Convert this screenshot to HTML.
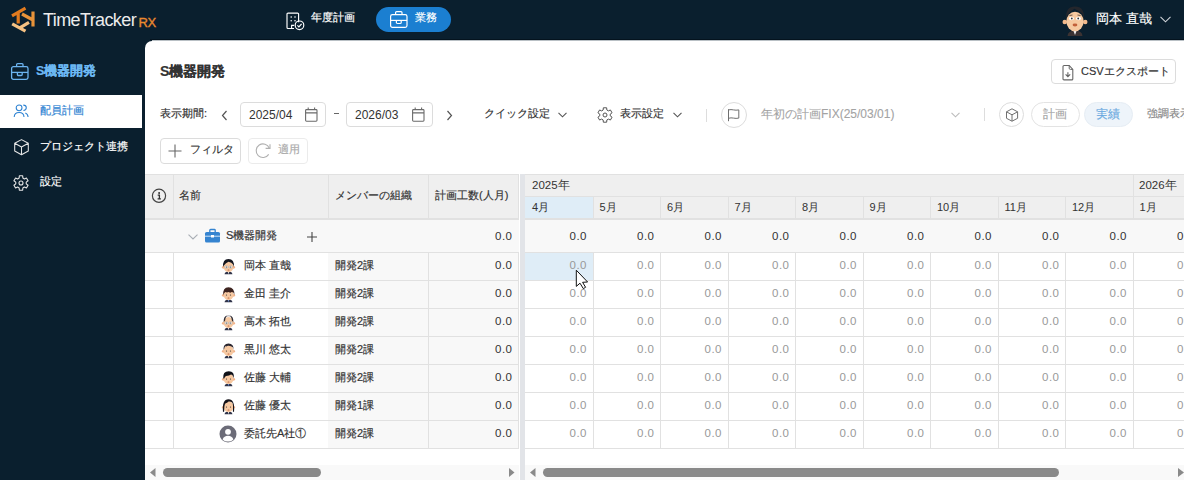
<!DOCTYPE html><html><head><meta charset="utf-8"><style>
*{box-sizing:border-box;margin:0;padding:0}
html,body{width:1184px;height:480px;overflow:hidden;background:#0a1f2e;font-family:"Liberation Sans",sans-serif;color:#333;font-size:12px}
.a{position:absolute}
.t{position:absolute;white-space:nowrap;line-height:1;-webkit-text-stroke:0.17px currentColor}
#main{position:absolute;left:145px;top:41px;width:1039px;height:439px;background:#fff;border-top-left-radius:7px;overflow:hidden}
svg{position:absolute;overflow:visible}
</style></head><body>
<svg style="left:8px;top:3px" width="32" height="32" viewBox="0 0 32 32">
<path d="M4 12.8 L17.5 5.2 M10.2 8.8 V20.5" fill="none" stroke="#e27b1f" stroke-width="3.2"/>
<path d="M25 8.6 V23.4 M14 11 L25 17" fill="none" stroke="#e8933a" stroke-width="3.2"/>
<path d="M4.2 20.8 L17.5 28.2 M12.2 24.6 L21 19.3" fill="none" stroke="#f6c283" stroke-width="3.2"/>
</svg>
<div class="t" style="left:43px;top:11px;font-size:18px;color:#ececec;letter-spacing:-0.6px;-webkit-text-stroke:0">TimeTracker</div>
<div class="t" style="left:138.5px;top:16px;font-size:13px;color:#eb8a2e;letter-spacing:-0.4px;-webkit-text-stroke:0.35px currentColor">RX</div>
<svg style="left:286px;top:11.6px" width="19" height="19" viewBox="0 0 19 19">
<path d="M12.6 10.2 V2.1 a1 1 0 0 0 -1 -1 H2 a1 1 0 0 0 -1 1 V15.5 a1 1 0 0 0 1 1 H8" fill="none" stroke="#fff" stroke-width="1.15"/>
<path d="M5.6 16.5 V13.4 H8.2" fill="none" stroke="#fff" stroke-width="1.1"/>
<g fill="#fff"><circle cx="5.2" cy="5" r="0.8"/><circle cx="9" cy="5" r="0.8"/><circle cx="5.2" cy="8.8" r="0.8"/><circle cx="9" cy="8.8" r="0.8"/></g>
<circle cx="13.5" cy="13.3" r="4.3" fill="none" stroke="#fff" stroke-width="1.15"/>
<path d="M11.4 13.4 L12.9 14.9 L15.6 11.8" fill="none" stroke="#fff" stroke-width="1.15"/>
</svg>
<div class="t" style="left:311px;top:12px;font-size:11px;color:#fff">年度計画</div>
<div class="a" style="left:376px;top:7px;width:75px;height:25px;border-radius:12.5px;background:#1b7fd1"></div>
<svg style="left:390px;top:11px" width="18" height="17" viewBox="0 0 18 17">
<rect x="0.6" y="3.7" width="16.4" height="12.6" rx="1.8" fill="none" stroke="#fff" stroke-width="1.2"/>
<path d="M5.6 3.7 V1.6 a1 1 0 0 1 1 -1 H11 a1 1 0 0 1 1 1 V3.7" fill="none" stroke="#fff" stroke-width="1.2"/>
<path d="M0.6 9.4 H17" stroke="#fff" stroke-width="1.2"/>
<path d="M6.4 9.4 V11.4 a1.1 1.1 0 0 0 1.1 1.1 H10.1 a1.1 1.1 0 0 0 1.1 -1.1 V9.4" fill="none" stroke="#fff" stroke-width="1.2"/>
</svg>
<div class="t" style="left:415px;top:12px;font-size:11px;color:#fff">業務</div>
<svg style="left:1060px;top:4px" width="30" height="32" viewBox="0 0 30 32">
<path d="M7.5 32 Q8 26.5 15 26.5 Q22 26.5 22.5 32 Z" fill="#3b3232"/>
<path d="M13.3 26.5 L15 31 L16.7 26.5 Z" fill="#f4f4f4"/>
<circle cx="4.8" cy="18" r="2.3" fill="#f2b98c"/><circle cx="25.2" cy="18" r="2.3" fill="#f2b98c"/>
<ellipse cx="15" cy="17.5" rx="8.6" ry="9.8" fill="#f6c9a0"/>
<path d="M6.3 15 Q5 2.5 15 2.5 Q25 2.5 23.7 15 L22.5 10 Q19.5 7 14.3 4.8 Q10.5 7.5 7.8 10.5 Z" fill="#24262c"/>
<ellipse cx="11.5" cy="14.5" rx="2.6" ry="1.7" fill="#fff"/><ellipse cx="18.5" cy="14.5" rx="2.6" ry="1.7" fill="#fff"/>
<circle cx="11.8" cy="14.5" r="0.9" fill="#333"/><circle cx="18.2" cy="14.5" r="0.9" fill="#333"/>
<path d="M9.5 11.5 L12.5 11 M17.5 11 L20.5 11.5" stroke="#5a4a40" stroke-width="0.9"/>
<ellipse cx="15" cy="21" rx="2.4" ry="1.4" fill="#c2603a"/>
</svg>
<div class="t" style="left:1096px;top:12px;font-size:13px;color:#fff">岡本 直哉</div>
<svg style="left:1160px;top:16px" width="11" height="7" viewBox="0 0 11 7"><path d="M0.5 0.8 L5.5 5.8 L10.5 0.8" fill="none" stroke="#cfd3d8" stroke-width="1.1"/></svg>
<svg style="left:11px;top:62.7px" width="18" height="17" viewBox="0 0 18 17">
<rect x="0.6" y="3.7" width="16.4" height="12.6" rx="1.8" fill="none" stroke="#6cb4f0" stroke-width="1.3"/>
<path d="M5.6 3.7 V1.6 a1 1 0 0 1 1 -1 H11 a1 1 0 0 1 1 1 V3.7" fill="none" stroke="#6cb4f0" stroke-width="1.3"/>
<path d="M0.6 9.4 H17" stroke="#6cb4f0" stroke-width="1.3"/>
<path d="M6.4 9.4 V11.4 a1.1 1.1 0 0 0 1.1 1.1 H10.1 a1.1 1.1 0 0 0 1.1 -1.1 V9.4" fill="none" stroke="#6cb4f0" stroke-width="1.3"/>
</svg>
<div class="t" style="left:36px;top:64.5px;font-size:12.5px;font-weight:bold;color:#6cb8f2">S機器開発</div>
<div class="a" style="left:0;top:95px;width:142px;height:33px;background:#fff"></div>
<svg style="left:13px;top:104px" width="17" height="14" viewBox="0 0 17 14">
<circle cx="6.1" cy="3.8" r="2.9" fill="none" stroke="#2d82d2" stroke-width="1.05"/>
<path d="M1.2 13 Q1.4 8.4 6.1 8.4 Q10.8 8.4 11 13" fill="none" stroke="#2d82d2" stroke-width="1.05"/>
<path d="M10.3 1.1 Q13.3 1.1 13.3 3.8 Q13.3 6.4 10.4 6.5" fill="none" stroke="#2d82d2" stroke-width="1.05"/>
<path d="M12.3 8.9 Q14.9 9.8 15.1 13" fill="none" stroke="#2d82d2" stroke-width="1.05"/>
</svg>
<div class="t" style="left:40px;top:105px;font-size:11px;color:#2d82d2">配員計画</div>
<svg style="left:13.5px;top:139px" width="16" height="17" viewBox="0 0 16 17">
<path d="M7.5 0.6 L14.3 4.3 V12 L7.5 15.7 L0.7 12 V4.3 Z M0.7 4.3 L7.5 8 L14.3 4.3 M7.5 8 V15.7" fill="none" stroke="#e6e6e6" stroke-width="1.05" stroke-linejoin="round"/>
</svg>
<div class="t" style="left:40px;top:141px;font-size:11px;color:#fff">プロジェクト連携</div>
<svg style="left:13px;top:175px" width="16" height="16" viewBox="0 0 16 16"><path d="M6.13 3.04 L6.35 0.79 L9.65 0.79 L9.87 3.04 L11.36 3.90 L13.42 2.96 L15.07 5.82 L13.23 7.14 L13.23 8.86 L15.07 10.18 L13.42 13.04 L11.36 12.10 L9.87 12.96 L9.65 15.21 L6.35 15.21 L6.13 12.96 L4.64 12.10 L2.58 13.04 L0.93 10.18 L2.77 8.86 L2.77 7.14 L0.93 5.82 L2.58 2.96 L4.64 3.90 Z" fill="none" stroke="#e6e6e6" stroke-width="1.1" stroke-linejoin="round"/><circle cx="8" cy="8" r="2.0" fill="none" stroke="#e6e6e6" stroke-width="1.1"/></svg>
<div class="t" style="left:40px;top:176px;font-size:11px;color:#fff">設定</div>
<div class="a" style="left:150px;top:39px;width:1034px;height:1px;background:#04131e"></div>
<div class="a" style="left:152px;top:40px;width:1032px;height:1px;background:#b9c0c5"></div>
<div id="main">
<div class="t" style="left:15px;top:23px;font-size:14px;color:#333;font-weight:bold">S機器開発</div>
<div class="a" style="left:906px;top:18px;width:125px;height:25px;border:1px solid #dcdcdc;border-radius:4px;background:#fff"></div>
<svg style="left:916.5px;top:23.5px" width="12" height="16" viewBox="0 0 12 16"><path d="M1 1.5 a1 1 0 0 1 1 -1 H7.2 L10.8 4.4 V13.9 a1 1 0 0 1 -1 1 H2 a1 1 0 0 1 -1 -1 Z" fill="none" stroke="#666" stroke-width="1.1"/><path d="M7.2 0.5 V3.2 a1.2 1.2 0 0 0 1.2 1.2 H10.8" fill="none" stroke="#666" stroke-width="1"/><path d="M5.9 7.2 V11.6 M3.6 9.4 L5.9 11.6 L8.2 9.4" fill="none" stroke="#666" stroke-width="1.15"/></svg>
<div class="t" style="left:936px;top:25px;font-size:11px;color:#333;">CSVエクスポート</div>
<div class="t" style="left:15px;top:67px;font-size:11px;color:#333;">表示期間:</div>
<svg style="left:76px;top:69px" width="7" height="11" viewBox="0 0 7 11"><path d="M5.5 1 L1.5 5.5 L5.5 10" fill="none" stroke="#555" stroke-width="1.2"/></svg>
<div class="a" style="left:95px;top:61px;width:86px;height:25px;border:1px solid #dcdcdc;border-radius:4px;background:#fff"></div>
<div class="t" style="left:104px;top:68px;font-size:12px;color:#333;-webkit-text-stroke:0">2025/04</div>
<svg style="left:159.5px;top:66px" width="13" height="15" viewBox="0 0 13 15"><rect x="0.6" y="2.6" width="11.4" height="11.6" rx="0.9" fill="none" stroke="#6a6a6a" stroke-width="1.1"/><path d="M0.6 5.9 H12 M3.2 0.6 V3 M9.6 0.6 V3" stroke="#6a6a6a" stroke-width="1.1"/></svg>
<div class="a" style="left:201px;top:61px;width:87px;height:25px;border:1px solid #dcdcdc;border-radius:4px;background:#fff"></div>
<div class="t" style="left:210px;top:68px;font-size:12px;color:#333;-webkit-text-stroke:0">2026/03</div>
<svg style="left:266.5px;top:66px" width="13" height="15" viewBox="0 0 13 15"><rect x="0.6" y="2.6" width="11.4" height="11.6" rx="0.9" fill="none" stroke="#6a6a6a" stroke-width="1.1"/><path d="M0.6 5.9 H12 M3.2 0.6 V3 M9.6 0.6 V3" stroke="#6a6a6a" stroke-width="1.1"/></svg>
<div class="a" style="left:189px;top:72px;width:5px;height:1px;background:#666"></div>
<svg style="left:301px;top:69px" width="7" height="11" viewBox="0 0 7 11"><path d="M1.5 1 L5.5 5.5 L1.5 10" fill="none" stroke="#555" stroke-width="1.2"/></svg>
<div class="t" style="left:339px;top:67px;font-size:11px;color:#333;">クイック設定</div>
<svg style="left:413px;top:71px" width="9" height="6" viewBox="0 0 9 6"><path d="M0.5 0.8 L4.5 4.8 L8.5 0.8" fill="none" stroke="#555" stroke-width="1.1"/></svg>
<svg style="left:452px;top:65.5px" width="16" height="16" viewBox="0 0 16 16"><path d="M6.13 3.04 L6.35 0.79 L9.65 0.79 L9.87 3.04 L11.36 3.90 L13.42 2.96 L15.07 5.82 L13.23 7.14 L13.23 8.86 L15.07 10.18 L13.42 13.04 L11.36 12.10 L9.87 12.96 L9.65 15.21 L6.35 15.21 L6.13 12.96 L4.64 12.10 L2.58 13.04 L0.93 10.18 L2.77 8.86 L2.77 7.14 L0.93 5.82 L2.58 2.96 L4.64 3.90 Z" fill="none" stroke="#555" stroke-width="1.0" stroke-linejoin="round"/><circle cx="8" cy="8" r="2.0" fill="none" stroke="#555" stroke-width="1.0"/></svg>
<div class="t" style="left:475px;top:67px;font-size:11px;color:#333;">表示設定</div>
<svg style="left:528px;top:71px" width="9" height="6" viewBox="0 0 9 6"><path d="M0.5 0.8 L4.5 4.8 L8.5 0.8" fill="none" stroke="#555" stroke-width="1.1"/></svg>
<div class="a" style="left:561px;top:68px;width:1px;height:13px;background:#ddd"></div>
<div class="a" style="left:576px;top:61px;width:26px;height:26px;border:1px solid #dcdcdc;border-radius:50%"></div>
<svg style="left:580px;top:65px" width="16" height="17" viewBox="0 0 16 17"><path d="M3.5 3.2 V15.2" stroke="#6f6f6f" stroke-width="1"/><path d="M3.5 3.9 Q6 3.3 8.5 3.9 Q11 4.5 13.8 3.9 V12.1 Q11 12.7 8.5 12.1 Q6 11.5 3.5 12.3" fill="none" stroke="#6f6f6f" stroke-width="1"/></svg>
<div class="t" style="left:616px;top:67px;font-size:12px;color:#a3a3a3;-webkit-text-stroke:0.1px currentColor">年初の計画FIX(25/03/01)</div>
<svg style="left:806px;top:71px" width="9" height="6" viewBox="0 0 9 6"><path d="M0.5 0.8 L4.5 4.8 L8.5 0.8" fill="none" stroke="#bbb" stroke-width="1.1"/></svg>
<div class="a" style="left:839px;top:67px;width:1px;height:13px;background:#ddd"></div>
<div class="a" style="left:854px;top:61px;width:25px;height:25px;border:1px solid #dcdcdc;border-radius:50%"></div>
<svg style="left:861px;top:67px" width="13" height="14" viewBox="0 0 13 14"><path d="M6 0.8 L11.6 3.8 V10.3 L6 13.2 L0.5 10.3 V3.8 Z M0.5 3.8 L6 6.8 L11.6 3.8 M6 6.8 V13.2" fill="none" stroke="#707070" stroke-width="1" stroke-linejoin="round"/></svg>
<div class="a" style="left:886px;top:61px;width:49px;height:25px;border:1px solid #e3e3e3;border-radius:13px;background:#fff"></div>
<div class="t" style="left:898px;top:67px;font-size:12px;color:#a3a3a3;-webkit-text-stroke:0.1px currentColor">計画</div>
<div class="a" style="left:939px;top:61px;width:49px;height:25px;border:1px solid #e6edf4;border-radius:13px;background:#eef4fa"></div>
<div class="t" style="left:951px;top:67px;font-size:12px;color:#68a8e0;-webkit-text-stroke:0.1px currentColor">実績</div>
<div class="t" style="left:1002px;top:67px;font-size:11px;color:#888;">強調表示</div>
<div class="a" style="left:15px;top:97px;width:81px;height:26px;border:1px solid #dcdcdc;border-radius:4px;background:#fff"></div>
<svg style="left:23px;top:103px" width="14" height="14" viewBox="0 0 14 14"><path d="M7 0.5 V13.5 M0.5 7 H13.5" stroke="#666" stroke-width="1.1"/></svg>
<div class="t" style="left:45px;top:103px;font-size:11px;color:#333;">フィルタ</div>
<div class="a" style="left:103px;top:97px;width:60px;height:26px;border:1px solid #ebebeb;border-radius:4px;background:#fff"></div>
<svg style="left:105px;top:97px" width="25" height="25" viewBox="0 0 25 25"><path d="M18.7 16.4 A6.8 6.8 0 1 1 19.3 10.2" fill="none" stroke="#b0b0b0" stroke-width="1.1"/><path d="M20 6.2 V10.4 H15.6" fill="none" stroke="#b0b0b0" stroke-width="1.1"/></svg>
<div class="t" style="left:133px;top:103px;font-size:11px;color:#aaa;">適用</div>
<div class="a" style="left:0px;top:133px;width:374px;height:46px;background:#efefef;border-top:1px solid #e1e1e1"></div>
<div class="a" style="left:0px;top:177px;width:374px;height:2px;background:#e1e1e1"></div>
<div class="a" style="left:28px;top:134px;width:1px;height:43px;background:#e1e1e1"></div>
<div class="a" style="left:183px;top:134px;width:1px;height:43px;background:#e1e1e1"></div>
<div class="a" style="left:283px;top:134px;width:1px;height:43px;background:#e1e1e1"></div>
<div class="a" style="left:373px;top:134px;width:1px;height:43px;background:#e1e1e1"></div>
<div class="a" style="left:374px;top:133px;width:1px;height:306px;background:#fff"></div>
<div class="a" style="left:375px;top:133px;width:5px;height:306px;background:#e2e4e8"></div>
<div class="a" style="left:380px;top:133px;width:659px;height:46px;background:#efefef;border-top:1px solid #e1e1e1"></div>
<div class="a" style="left:380px;top:155px;width:659px;height:1px;background:#e1e1e1"></div>
<div class="a" style="left:380px;top:177px;width:659px;height:2px;background:#e1e1e1"></div>
<div class="a" style="left:380px;top:156px;width:67.5px;height:21px;background:#dfedf7"></div>
<div class="t" style="left:387.0px;top:161px;font-size:11px;color:#333;-webkit-text-stroke:0">4月</div>
<div class="a" style="left:447.5px;top:156px;width:1.0px;height:21px;background:#e1e1e1"></div>
<div class="t" style="left:454.5px;top:161px;font-size:11px;color:#333;-webkit-text-stroke:0">5月</div>
<div class="a" style="left:515.0px;top:156px;width:1.0px;height:21px;background:#e1e1e1"></div>
<div class="t" style="left:522.0px;top:161px;font-size:11px;color:#333;-webkit-text-stroke:0">6月</div>
<div class="a" style="left:582.5px;top:156px;width:1.0px;height:21px;background:#e1e1e1"></div>
<div class="t" style="left:589.5px;top:161px;font-size:11px;color:#333;-webkit-text-stroke:0">7月</div>
<div class="a" style="left:650.0px;top:156px;width:1.0px;height:21px;background:#e1e1e1"></div>
<div class="t" style="left:657.0px;top:161px;font-size:11px;color:#333;-webkit-text-stroke:0">8月</div>
<div class="a" style="left:717.5px;top:156px;width:1.0px;height:21px;background:#e1e1e1"></div>
<div class="t" style="left:724.5px;top:161px;font-size:11px;color:#333;-webkit-text-stroke:0">9月</div>
<div class="a" style="left:785.0px;top:156px;width:1.0px;height:21px;background:#e1e1e1"></div>
<div class="t" style="left:792.0px;top:161px;font-size:11px;color:#333;-webkit-text-stroke:0">10月</div>
<div class="a" style="left:852.5px;top:156px;width:1.0px;height:21px;background:#e1e1e1"></div>
<div class="t" style="left:859.5px;top:161px;font-size:11px;color:#333;-webkit-text-stroke:0">11月</div>
<div class="a" style="left:920.0px;top:156px;width:1.0px;height:21px;background:#e1e1e1"></div>
<div class="t" style="left:927.0px;top:161px;font-size:11px;color:#333;-webkit-text-stroke:0">12月</div>
<div class="a" style="left:987.5px;top:156px;width:1.0px;height:21px;background:#e1e1e1"></div>
<div class="t" style="left:994.5px;top:161px;font-size:11px;color:#333;-webkit-text-stroke:0">1月</div>
<div class="a" style="left:987.5px;top:134px;width:1.0px;height:22px;background:#e1e1e1"></div>
<div class="t" style="left:387px;top:138.5px;font-size:11.5px;color:#333;-webkit-text-stroke:0">2025年</div>
<div class="t" style="left:994px;top:138.5px;font-size:11.5px;color:#333;-webkit-text-stroke:0">2026年</div>
<svg style="left:6px;top:147px" width="16" height="16" viewBox="0 0 16 16"><circle cx="8" cy="7.8" r="6.6" fill="none" stroke="#444" stroke-width="1.2"/><circle cx="8.1" cy="5.1" r="1" fill="#333"/><path d="M6.7 7.2 H8.4 V10.9 M6.6 10.9 H9.9" fill="none" stroke="#333" stroke-width="1.3"/></svg>
<div class="t" style="left:34px;top:149px;font-size:11px;color:#333;">名前</div>
<div class="t" style="left:190px;top:149px;font-size:11px;color:#333;">メンバーの組織</div>
<div class="t" style="left:290px;top:149px;font-size:11px;color:#333;">計画工数(人月)</div>
<div class="a" style="left:0px;top:179px;width:374px;height:33px;background:#f8f8f8"></div>
<div class="a" style="left:380px;top:179px;width:659px;height:33px;background:#f8f8f8"></div>
<div class="a" style="left:0px;top:211px;width:374px;height:1px;background:#e1e1e1"></div>
<div class="a" style="left:380px;top:211px;width:659px;height:1px;background:#e1e1e1"></div>
<svg style="left:43px;top:192.5px" width="10" height="6" viewBox="0 0 10 6"><path d="M0.5 0.6 L5 5 L9.5 0.6" fill="none" stroke="#a9aeb5" stroke-width="1.1"/></svg>
<svg style="left:60px;top:188px" width="15" height="14" viewBox="0 0 15 14"><rect x="0" y="3" width="15" height="10.5" rx="1.6" fill="#3584d0"/><path d="M4.8 3.2 V1.3 a0.8 0.8 0 0 1 0.8 -0.8 H9.4 a0.8 0.8 0 0 1 0.8 0.8 V3.2" fill="none" stroke="#3584d0" stroke-width="1.3"/><path d="M0 7.2 H15" stroke="#cfe2f5" stroke-width="1"/><rect x="6" y="6" width="3" height="2.5" fill="#fff"/></svg>
<div class="t" style="left:81px;top:189px;font-size:11px;color:#333;">S機器開発</div>
<svg style="left:162px;top:190.5px" width="10" height="10" viewBox="0 0 10 10"><path d="M5 0 V10 M0 5 H10" stroke="#444" stroke-width="1.1"/></svg>
<div class="t" style="left:267.5px;width:100px;text-align:right;top:189.5px;font-size:11.5px;letter-spacing:0.5px;-webkit-text-stroke:0;color:#333">0.0</div>
<div class="t" style="left:342.0px;width:100px;text-align:right;top:189.5px;font-size:11.5px;letter-spacing:0.5px;-webkit-text-stroke:0;color:#333">0.0</div>
<div class="t" style="left:409.5px;width:100px;text-align:right;top:189.5px;font-size:11.5px;letter-spacing:0.5px;-webkit-text-stroke:0;color:#333">0.0</div>
<div class="t" style="left:477.0px;width:100px;text-align:right;top:189.5px;font-size:11.5px;letter-spacing:0.5px;-webkit-text-stroke:0;color:#333">0.0</div>
<div class="t" style="left:544.5px;width:100px;text-align:right;top:189.5px;font-size:11.5px;letter-spacing:0.5px;-webkit-text-stroke:0;color:#333">0.0</div>
<div class="t" style="left:612.0px;width:100px;text-align:right;top:189.5px;font-size:11.5px;letter-spacing:0.5px;-webkit-text-stroke:0;color:#333">0.0</div>
<div class="t" style="left:679.5px;width:100px;text-align:right;top:189.5px;font-size:11.5px;letter-spacing:0.5px;-webkit-text-stroke:0;color:#333">0.0</div>
<div class="t" style="left:747.0px;width:100px;text-align:right;top:189.5px;font-size:11.5px;letter-spacing:0.5px;-webkit-text-stroke:0;color:#333">0.0</div>
<div class="t" style="left:814.5px;width:100px;text-align:right;top:189.5px;font-size:11.5px;letter-spacing:0.5px;-webkit-text-stroke:0;color:#333">0.0</div>
<div class="t" style="left:882.0px;width:100px;text-align:right;top:189.5px;font-size:11.5px;letter-spacing:0.5px;-webkit-text-stroke:0;color:#333">0.0</div>
<div class="t" style="left:949.5px;width:100px;text-align:right;top:189.5px;font-size:11.5px;letter-spacing:0.5px;-webkit-text-stroke:0;color:#333">0.0</div>
<div class="a" style="left:0px;top:212px;width:183px;height:28px;background:#fff"></div>
<div class="a" style="left:183px;top:212px;width:190px;height:28px;background:#f8f8f8"></div>
<div class="a" style="left:380px;top:212px;width:659px;height:28px;background:#fff"></div>
<div class="a" style="left:0px;top:239px;width:374px;height:1px;background:#e1e1e1"></div>
<div class="a" style="left:380px;top:239px;width:659px;height:1px;background:#e1e1e1"></div>
<div class="a" style="left:28px;top:212px;width:1px;height:27px;background:#e1e1e1"></div>
<div class="a" style="left:283px;top:212px;width:1px;height:27px;background:#e1e1e1"></div>
<div class="a" style="left:373px;top:212px;width:1px;height:27px;background:#e1e1e1"></div>
<div class="a" style="left:380px;top:212px;width:67.5px;height:27px;background:#dfedf7"></div>
<div class="a" style="left:447.5px;top:212px;width:1.0px;height:27px;background:#e1e1e1"></div>
<div class="a" style="left:515.0px;top:212px;width:1.0px;height:27px;background:#e1e1e1"></div>
<div class="a" style="left:582.5px;top:212px;width:1.0px;height:27px;background:#e1e1e1"></div>
<div class="a" style="left:650.0px;top:212px;width:1.0px;height:27px;background:#e1e1e1"></div>
<div class="a" style="left:717.5px;top:212px;width:1.0px;height:27px;background:#e1e1e1"></div>
<div class="a" style="left:785.0px;top:212px;width:1.0px;height:27px;background:#e1e1e1"></div>
<div class="a" style="left:852.5px;top:212px;width:1.0px;height:27px;background:#e1e1e1"></div>
<div class="a" style="left:920.0px;top:212px;width:1.0px;height:27px;background:#e1e1e1"></div>
<div class="a" style="left:987.5px;top:212px;width:1.0px;height:27px;background:#e1e1e1"></div>
<div class="a" style="left:1055.0px;top:212px;width:1.0px;height:27px;background:#e1e1e1"></div>
<div class="t" style="left:99px;top:219px;font-size:11px;color:#333;">岡本 直哉</div>
<div class="t" style="left:190px;top:219px;font-size:11px;color:#333;">開発2課</div>
<div class="t" style="left:267.5px;width:100px;text-align:right;top:219px;font-size:11.5px;letter-spacing:0.5px;-webkit-text-stroke:0;color:#333">0.0</div>
<div class="t" style="left:342.0px;width:100px;text-align:right;top:219px;font-size:11.5px;letter-spacing:0.5px;-webkit-text-stroke:0;color:#999">0.0</div>
<div class="t" style="left:409.5px;width:100px;text-align:right;top:219px;font-size:11.5px;letter-spacing:0.5px;-webkit-text-stroke:0;color:#999">0.0</div>
<div class="t" style="left:477.0px;width:100px;text-align:right;top:219px;font-size:11.5px;letter-spacing:0.5px;-webkit-text-stroke:0;color:#999">0.0</div>
<div class="t" style="left:544.5px;width:100px;text-align:right;top:219px;font-size:11.5px;letter-spacing:0.5px;-webkit-text-stroke:0;color:#999">0.0</div>
<div class="t" style="left:612.0px;width:100px;text-align:right;top:219px;font-size:11.5px;letter-spacing:0.5px;-webkit-text-stroke:0;color:#999">0.0</div>
<div class="t" style="left:679.5px;width:100px;text-align:right;top:219px;font-size:11.5px;letter-spacing:0.5px;-webkit-text-stroke:0;color:#999">0.0</div>
<div class="t" style="left:747.0px;width:100px;text-align:right;top:219px;font-size:11.5px;letter-spacing:0.5px;-webkit-text-stroke:0;color:#999">0.0</div>
<div class="t" style="left:814.5px;width:100px;text-align:right;top:219px;font-size:11.5px;letter-spacing:0.5px;-webkit-text-stroke:0;color:#999">0.0</div>
<div class="t" style="left:882.0px;width:100px;text-align:right;top:219px;font-size:11.5px;letter-spacing:0.5px;-webkit-text-stroke:0;color:#999">0.0</div>
<div class="t" style="left:949.5px;width:100px;text-align:right;top:219px;font-size:11.5px;letter-spacing:0.5px;-webkit-text-stroke:0;color:#999">0.0</div>
<div class="a" style="left:0px;top:240px;width:183px;height:28px;background:#fff"></div>
<div class="a" style="left:183px;top:240px;width:190px;height:28px;background:#f8f8f8"></div>
<div class="a" style="left:380px;top:240px;width:659px;height:28px;background:#fff"></div>
<div class="a" style="left:0px;top:267px;width:374px;height:1px;background:#e1e1e1"></div>
<div class="a" style="left:380px;top:267px;width:659px;height:1px;background:#e1e1e1"></div>
<div class="a" style="left:28px;top:240px;width:1px;height:27px;background:#e1e1e1"></div>
<div class="a" style="left:283px;top:240px;width:1px;height:27px;background:#e1e1e1"></div>
<div class="a" style="left:373px;top:240px;width:1px;height:27px;background:#e1e1e1"></div>
<div class="a" style="left:447.5px;top:240px;width:1.0px;height:27px;background:#e1e1e1"></div>
<div class="a" style="left:515.0px;top:240px;width:1.0px;height:27px;background:#e1e1e1"></div>
<div class="a" style="left:582.5px;top:240px;width:1.0px;height:27px;background:#e1e1e1"></div>
<div class="a" style="left:650.0px;top:240px;width:1.0px;height:27px;background:#e1e1e1"></div>
<div class="a" style="left:717.5px;top:240px;width:1.0px;height:27px;background:#e1e1e1"></div>
<div class="a" style="left:785.0px;top:240px;width:1.0px;height:27px;background:#e1e1e1"></div>
<div class="a" style="left:852.5px;top:240px;width:1.0px;height:27px;background:#e1e1e1"></div>
<div class="a" style="left:920.0px;top:240px;width:1.0px;height:27px;background:#e1e1e1"></div>
<div class="a" style="left:987.5px;top:240px;width:1.0px;height:27px;background:#e1e1e1"></div>
<div class="a" style="left:1055.0px;top:240px;width:1.0px;height:27px;background:#e1e1e1"></div>
<div class="t" style="left:99px;top:247px;font-size:11px;color:#333;">金田 圭介</div>
<div class="t" style="left:190px;top:247px;font-size:11px;color:#333;">開発2課</div>
<div class="t" style="left:267.5px;width:100px;text-align:right;top:247px;font-size:11.5px;letter-spacing:0.5px;-webkit-text-stroke:0;color:#333">0.0</div>
<div class="t" style="left:342.0px;width:100px;text-align:right;top:247px;font-size:11.5px;letter-spacing:0.5px;-webkit-text-stroke:0;color:#999">0.0</div>
<div class="t" style="left:409.5px;width:100px;text-align:right;top:247px;font-size:11.5px;letter-spacing:0.5px;-webkit-text-stroke:0;color:#999">0.0</div>
<div class="t" style="left:477.0px;width:100px;text-align:right;top:247px;font-size:11.5px;letter-spacing:0.5px;-webkit-text-stroke:0;color:#999">0.0</div>
<div class="t" style="left:544.5px;width:100px;text-align:right;top:247px;font-size:11.5px;letter-spacing:0.5px;-webkit-text-stroke:0;color:#999">0.0</div>
<div class="t" style="left:612.0px;width:100px;text-align:right;top:247px;font-size:11.5px;letter-spacing:0.5px;-webkit-text-stroke:0;color:#999">0.0</div>
<div class="t" style="left:679.5px;width:100px;text-align:right;top:247px;font-size:11.5px;letter-spacing:0.5px;-webkit-text-stroke:0;color:#999">0.0</div>
<div class="t" style="left:747.0px;width:100px;text-align:right;top:247px;font-size:11.5px;letter-spacing:0.5px;-webkit-text-stroke:0;color:#999">0.0</div>
<div class="t" style="left:814.5px;width:100px;text-align:right;top:247px;font-size:11.5px;letter-spacing:0.5px;-webkit-text-stroke:0;color:#999">0.0</div>
<div class="t" style="left:882.0px;width:100px;text-align:right;top:247px;font-size:11.5px;letter-spacing:0.5px;-webkit-text-stroke:0;color:#999">0.0</div>
<div class="t" style="left:949.5px;width:100px;text-align:right;top:247px;font-size:11.5px;letter-spacing:0.5px;-webkit-text-stroke:0;color:#999">0.0</div>
<div class="a" style="left:0px;top:268px;width:183px;height:28px;background:#fff"></div>
<div class="a" style="left:183px;top:268px;width:190px;height:28px;background:#f8f8f8"></div>
<div class="a" style="left:380px;top:268px;width:659px;height:28px;background:#fff"></div>
<div class="a" style="left:0px;top:295px;width:374px;height:1px;background:#e1e1e1"></div>
<div class="a" style="left:380px;top:295px;width:659px;height:1px;background:#e1e1e1"></div>
<div class="a" style="left:28px;top:268px;width:1px;height:27px;background:#e1e1e1"></div>
<div class="a" style="left:283px;top:268px;width:1px;height:27px;background:#e1e1e1"></div>
<div class="a" style="left:373px;top:268px;width:1px;height:27px;background:#e1e1e1"></div>
<div class="a" style="left:447.5px;top:268px;width:1.0px;height:27px;background:#e1e1e1"></div>
<div class="a" style="left:515.0px;top:268px;width:1.0px;height:27px;background:#e1e1e1"></div>
<div class="a" style="left:582.5px;top:268px;width:1.0px;height:27px;background:#e1e1e1"></div>
<div class="a" style="left:650.0px;top:268px;width:1.0px;height:27px;background:#e1e1e1"></div>
<div class="a" style="left:717.5px;top:268px;width:1.0px;height:27px;background:#e1e1e1"></div>
<div class="a" style="left:785.0px;top:268px;width:1.0px;height:27px;background:#e1e1e1"></div>
<div class="a" style="left:852.5px;top:268px;width:1.0px;height:27px;background:#e1e1e1"></div>
<div class="a" style="left:920.0px;top:268px;width:1.0px;height:27px;background:#e1e1e1"></div>
<div class="a" style="left:987.5px;top:268px;width:1.0px;height:27px;background:#e1e1e1"></div>
<div class="a" style="left:1055.0px;top:268px;width:1.0px;height:27px;background:#e1e1e1"></div>
<div class="t" style="left:99px;top:275px;font-size:11px;color:#333;">高木 拓也</div>
<div class="t" style="left:190px;top:275px;font-size:11px;color:#333;">開発2課</div>
<div class="t" style="left:267.5px;width:100px;text-align:right;top:275px;font-size:11.5px;letter-spacing:0.5px;-webkit-text-stroke:0;color:#333">0.0</div>
<div class="t" style="left:342.0px;width:100px;text-align:right;top:275px;font-size:11.5px;letter-spacing:0.5px;-webkit-text-stroke:0;color:#999">0.0</div>
<div class="t" style="left:409.5px;width:100px;text-align:right;top:275px;font-size:11.5px;letter-spacing:0.5px;-webkit-text-stroke:0;color:#999">0.0</div>
<div class="t" style="left:477.0px;width:100px;text-align:right;top:275px;font-size:11.5px;letter-spacing:0.5px;-webkit-text-stroke:0;color:#999">0.0</div>
<div class="t" style="left:544.5px;width:100px;text-align:right;top:275px;font-size:11.5px;letter-spacing:0.5px;-webkit-text-stroke:0;color:#999">0.0</div>
<div class="t" style="left:612.0px;width:100px;text-align:right;top:275px;font-size:11.5px;letter-spacing:0.5px;-webkit-text-stroke:0;color:#999">0.0</div>
<div class="t" style="left:679.5px;width:100px;text-align:right;top:275px;font-size:11.5px;letter-spacing:0.5px;-webkit-text-stroke:0;color:#999">0.0</div>
<div class="t" style="left:747.0px;width:100px;text-align:right;top:275px;font-size:11.5px;letter-spacing:0.5px;-webkit-text-stroke:0;color:#999">0.0</div>
<div class="t" style="left:814.5px;width:100px;text-align:right;top:275px;font-size:11.5px;letter-spacing:0.5px;-webkit-text-stroke:0;color:#999">0.0</div>
<div class="t" style="left:882.0px;width:100px;text-align:right;top:275px;font-size:11.5px;letter-spacing:0.5px;-webkit-text-stroke:0;color:#999">0.0</div>
<div class="t" style="left:949.5px;width:100px;text-align:right;top:275px;font-size:11.5px;letter-spacing:0.5px;-webkit-text-stroke:0;color:#999">0.0</div>
<div class="a" style="left:0px;top:296px;width:183px;height:28px;background:#fff"></div>
<div class="a" style="left:183px;top:296px;width:190px;height:28px;background:#f8f8f8"></div>
<div class="a" style="left:380px;top:296px;width:659px;height:28px;background:#fff"></div>
<div class="a" style="left:0px;top:323px;width:374px;height:1px;background:#e1e1e1"></div>
<div class="a" style="left:380px;top:323px;width:659px;height:1px;background:#e1e1e1"></div>
<div class="a" style="left:28px;top:296px;width:1px;height:27px;background:#e1e1e1"></div>
<div class="a" style="left:283px;top:296px;width:1px;height:27px;background:#e1e1e1"></div>
<div class="a" style="left:373px;top:296px;width:1px;height:27px;background:#e1e1e1"></div>
<div class="a" style="left:447.5px;top:296px;width:1.0px;height:27px;background:#e1e1e1"></div>
<div class="a" style="left:515.0px;top:296px;width:1.0px;height:27px;background:#e1e1e1"></div>
<div class="a" style="left:582.5px;top:296px;width:1.0px;height:27px;background:#e1e1e1"></div>
<div class="a" style="left:650.0px;top:296px;width:1.0px;height:27px;background:#e1e1e1"></div>
<div class="a" style="left:717.5px;top:296px;width:1.0px;height:27px;background:#e1e1e1"></div>
<div class="a" style="left:785.0px;top:296px;width:1.0px;height:27px;background:#e1e1e1"></div>
<div class="a" style="left:852.5px;top:296px;width:1.0px;height:27px;background:#e1e1e1"></div>
<div class="a" style="left:920.0px;top:296px;width:1.0px;height:27px;background:#e1e1e1"></div>
<div class="a" style="left:987.5px;top:296px;width:1.0px;height:27px;background:#e1e1e1"></div>
<div class="a" style="left:1055.0px;top:296px;width:1.0px;height:27px;background:#e1e1e1"></div>
<div class="t" style="left:99px;top:303px;font-size:11px;color:#333;">黒川 悠太</div>
<div class="t" style="left:190px;top:303px;font-size:11px;color:#333;">開発2課</div>
<div class="t" style="left:267.5px;width:100px;text-align:right;top:303px;font-size:11.5px;letter-spacing:0.5px;-webkit-text-stroke:0;color:#333">0.0</div>
<div class="t" style="left:342.0px;width:100px;text-align:right;top:303px;font-size:11.5px;letter-spacing:0.5px;-webkit-text-stroke:0;color:#999">0.0</div>
<div class="t" style="left:409.5px;width:100px;text-align:right;top:303px;font-size:11.5px;letter-spacing:0.5px;-webkit-text-stroke:0;color:#999">0.0</div>
<div class="t" style="left:477.0px;width:100px;text-align:right;top:303px;font-size:11.5px;letter-spacing:0.5px;-webkit-text-stroke:0;color:#999">0.0</div>
<div class="t" style="left:544.5px;width:100px;text-align:right;top:303px;font-size:11.5px;letter-spacing:0.5px;-webkit-text-stroke:0;color:#999">0.0</div>
<div class="t" style="left:612.0px;width:100px;text-align:right;top:303px;font-size:11.5px;letter-spacing:0.5px;-webkit-text-stroke:0;color:#999">0.0</div>
<div class="t" style="left:679.5px;width:100px;text-align:right;top:303px;font-size:11.5px;letter-spacing:0.5px;-webkit-text-stroke:0;color:#999">0.0</div>
<div class="t" style="left:747.0px;width:100px;text-align:right;top:303px;font-size:11.5px;letter-spacing:0.5px;-webkit-text-stroke:0;color:#999">0.0</div>
<div class="t" style="left:814.5px;width:100px;text-align:right;top:303px;font-size:11.5px;letter-spacing:0.5px;-webkit-text-stroke:0;color:#999">0.0</div>
<div class="t" style="left:882.0px;width:100px;text-align:right;top:303px;font-size:11.5px;letter-spacing:0.5px;-webkit-text-stroke:0;color:#999">0.0</div>
<div class="t" style="left:949.5px;width:100px;text-align:right;top:303px;font-size:11.5px;letter-spacing:0.5px;-webkit-text-stroke:0;color:#999">0.0</div>
<div class="a" style="left:0px;top:324px;width:183px;height:28px;background:#fff"></div>
<div class="a" style="left:183px;top:324px;width:190px;height:28px;background:#f8f8f8"></div>
<div class="a" style="left:380px;top:324px;width:659px;height:28px;background:#fff"></div>
<div class="a" style="left:0px;top:351px;width:374px;height:1px;background:#e1e1e1"></div>
<div class="a" style="left:380px;top:351px;width:659px;height:1px;background:#e1e1e1"></div>
<div class="a" style="left:28px;top:324px;width:1px;height:27px;background:#e1e1e1"></div>
<div class="a" style="left:283px;top:324px;width:1px;height:27px;background:#e1e1e1"></div>
<div class="a" style="left:373px;top:324px;width:1px;height:27px;background:#e1e1e1"></div>
<div class="a" style="left:447.5px;top:324px;width:1.0px;height:27px;background:#e1e1e1"></div>
<div class="a" style="left:515.0px;top:324px;width:1.0px;height:27px;background:#e1e1e1"></div>
<div class="a" style="left:582.5px;top:324px;width:1.0px;height:27px;background:#e1e1e1"></div>
<div class="a" style="left:650.0px;top:324px;width:1.0px;height:27px;background:#e1e1e1"></div>
<div class="a" style="left:717.5px;top:324px;width:1.0px;height:27px;background:#e1e1e1"></div>
<div class="a" style="left:785.0px;top:324px;width:1.0px;height:27px;background:#e1e1e1"></div>
<div class="a" style="left:852.5px;top:324px;width:1.0px;height:27px;background:#e1e1e1"></div>
<div class="a" style="left:920.0px;top:324px;width:1.0px;height:27px;background:#e1e1e1"></div>
<div class="a" style="left:987.5px;top:324px;width:1.0px;height:27px;background:#e1e1e1"></div>
<div class="a" style="left:1055.0px;top:324px;width:1.0px;height:27px;background:#e1e1e1"></div>
<div class="t" style="left:99px;top:331px;font-size:11px;color:#333;">佐藤 大輔</div>
<div class="t" style="left:190px;top:331px;font-size:11px;color:#333;">開発2課</div>
<div class="t" style="left:267.5px;width:100px;text-align:right;top:331px;font-size:11.5px;letter-spacing:0.5px;-webkit-text-stroke:0;color:#333">0.0</div>
<div class="t" style="left:342.0px;width:100px;text-align:right;top:331px;font-size:11.5px;letter-spacing:0.5px;-webkit-text-stroke:0;color:#999">0.0</div>
<div class="t" style="left:409.5px;width:100px;text-align:right;top:331px;font-size:11.5px;letter-spacing:0.5px;-webkit-text-stroke:0;color:#999">0.0</div>
<div class="t" style="left:477.0px;width:100px;text-align:right;top:331px;font-size:11.5px;letter-spacing:0.5px;-webkit-text-stroke:0;color:#999">0.0</div>
<div class="t" style="left:544.5px;width:100px;text-align:right;top:331px;font-size:11.5px;letter-spacing:0.5px;-webkit-text-stroke:0;color:#999">0.0</div>
<div class="t" style="left:612.0px;width:100px;text-align:right;top:331px;font-size:11.5px;letter-spacing:0.5px;-webkit-text-stroke:0;color:#999">0.0</div>
<div class="t" style="left:679.5px;width:100px;text-align:right;top:331px;font-size:11.5px;letter-spacing:0.5px;-webkit-text-stroke:0;color:#999">0.0</div>
<div class="t" style="left:747.0px;width:100px;text-align:right;top:331px;font-size:11.5px;letter-spacing:0.5px;-webkit-text-stroke:0;color:#999">0.0</div>
<div class="t" style="left:814.5px;width:100px;text-align:right;top:331px;font-size:11.5px;letter-spacing:0.5px;-webkit-text-stroke:0;color:#999">0.0</div>
<div class="t" style="left:882.0px;width:100px;text-align:right;top:331px;font-size:11.5px;letter-spacing:0.5px;-webkit-text-stroke:0;color:#999">0.0</div>
<div class="t" style="left:949.5px;width:100px;text-align:right;top:331px;font-size:11.5px;letter-spacing:0.5px;-webkit-text-stroke:0;color:#999">0.0</div>
<div class="a" style="left:0px;top:352px;width:183px;height:28px;background:#fff"></div>
<div class="a" style="left:183px;top:352px;width:190px;height:28px;background:#f8f8f8"></div>
<div class="a" style="left:380px;top:352px;width:659px;height:28px;background:#fff"></div>
<div class="a" style="left:0px;top:379px;width:374px;height:1px;background:#e1e1e1"></div>
<div class="a" style="left:380px;top:379px;width:659px;height:1px;background:#e1e1e1"></div>
<div class="a" style="left:28px;top:352px;width:1px;height:27px;background:#e1e1e1"></div>
<div class="a" style="left:283px;top:352px;width:1px;height:27px;background:#e1e1e1"></div>
<div class="a" style="left:373px;top:352px;width:1px;height:27px;background:#e1e1e1"></div>
<div class="a" style="left:447.5px;top:352px;width:1.0px;height:27px;background:#e1e1e1"></div>
<div class="a" style="left:515.0px;top:352px;width:1.0px;height:27px;background:#e1e1e1"></div>
<div class="a" style="left:582.5px;top:352px;width:1.0px;height:27px;background:#e1e1e1"></div>
<div class="a" style="left:650.0px;top:352px;width:1.0px;height:27px;background:#e1e1e1"></div>
<div class="a" style="left:717.5px;top:352px;width:1.0px;height:27px;background:#e1e1e1"></div>
<div class="a" style="left:785.0px;top:352px;width:1.0px;height:27px;background:#e1e1e1"></div>
<div class="a" style="left:852.5px;top:352px;width:1.0px;height:27px;background:#e1e1e1"></div>
<div class="a" style="left:920.0px;top:352px;width:1.0px;height:27px;background:#e1e1e1"></div>
<div class="a" style="left:987.5px;top:352px;width:1.0px;height:27px;background:#e1e1e1"></div>
<div class="a" style="left:1055.0px;top:352px;width:1.0px;height:27px;background:#e1e1e1"></div>
<div class="t" style="left:99px;top:359px;font-size:11px;color:#333;">佐藤 優太</div>
<div class="t" style="left:190px;top:359px;font-size:11px;color:#333;">開発1課</div>
<div class="t" style="left:267.5px;width:100px;text-align:right;top:359px;font-size:11.5px;letter-spacing:0.5px;-webkit-text-stroke:0;color:#333">0.0</div>
<div class="t" style="left:342.0px;width:100px;text-align:right;top:359px;font-size:11.5px;letter-spacing:0.5px;-webkit-text-stroke:0;color:#999">0.0</div>
<div class="t" style="left:409.5px;width:100px;text-align:right;top:359px;font-size:11.5px;letter-spacing:0.5px;-webkit-text-stroke:0;color:#999">0.0</div>
<div class="t" style="left:477.0px;width:100px;text-align:right;top:359px;font-size:11.5px;letter-spacing:0.5px;-webkit-text-stroke:0;color:#999">0.0</div>
<div class="t" style="left:544.5px;width:100px;text-align:right;top:359px;font-size:11.5px;letter-spacing:0.5px;-webkit-text-stroke:0;color:#999">0.0</div>
<div class="t" style="left:612.0px;width:100px;text-align:right;top:359px;font-size:11.5px;letter-spacing:0.5px;-webkit-text-stroke:0;color:#999">0.0</div>
<div class="t" style="left:679.5px;width:100px;text-align:right;top:359px;font-size:11.5px;letter-spacing:0.5px;-webkit-text-stroke:0;color:#999">0.0</div>
<div class="t" style="left:747.0px;width:100px;text-align:right;top:359px;font-size:11.5px;letter-spacing:0.5px;-webkit-text-stroke:0;color:#999">0.0</div>
<div class="t" style="left:814.5px;width:100px;text-align:right;top:359px;font-size:11.5px;letter-spacing:0.5px;-webkit-text-stroke:0;color:#999">0.0</div>
<div class="t" style="left:882.0px;width:100px;text-align:right;top:359px;font-size:11.5px;letter-spacing:0.5px;-webkit-text-stroke:0;color:#999">0.0</div>
<div class="t" style="left:949.5px;width:100px;text-align:right;top:359px;font-size:11.5px;letter-spacing:0.5px;-webkit-text-stroke:0;color:#999">0.0</div>
<div class="a" style="left:0px;top:380px;width:183px;height:28px;background:#fff"></div>
<div class="a" style="left:183px;top:380px;width:190px;height:28px;background:#f8f8f8"></div>
<div class="a" style="left:380px;top:380px;width:659px;height:28px;background:#fff"></div>
<div class="a" style="left:0px;top:407px;width:374px;height:1px;background:#e1e1e1"></div>
<div class="a" style="left:380px;top:407px;width:659px;height:1px;background:#e1e1e1"></div>
<div class="a" style="left:28px;top:380px;width:1px;height:27px;background:#e1e1e1"></div>
<div class="a" style="left:283px;top:380px;width:1px;height:27px;background:#e1e1e1"></div>
<div class="a" style="left:373px;top:380px;width:1px;height:27px;background:#e1e1e1"></div>
<div class="a" style="left:447.5px;top:380px;width:1.0px;height:27px;background:#e1e1e1"></div>
<div class="a" style="left:515.0px;top:380px;width:1.0px;height:27px;background:#e1e1e1"></div>
<div class="a" style="left:582.5px;top:380px;width:1.0px;height:27px;background:#e1e1e1"></div>
<div class="a" style="left:650.0px;top:380px;width:1.0px;height:27px;background:#e1e1e1"></div>
<div class="a" style="left:717.5px;top:380px;width:1.0px;height:27px;background:#e1e1e1"></div>
<div class="a" style="left:785.0px;top:380px;width:1.0px;height:27px;background:#e1e1e1"></div>
<div class="a" style="left:852.5px;top:380px;width:1.0px;height:27px;background:#e1e1e1"></div>
<div class="a" style="left:920.0px;top:380px;width:1.0px;height:27px;background:#e1e1e1"></div>
<div class="a" style="left:987.5px;top:380px;width:1.0px;height:27px;background:#e1e1e1"></div>
<div class="a" style="left:1055.0px;top:380px;width:1.0px;height:27px;background:#e1e1e1"></div>
<div class="t" style="left:99px;top:387px;font-size:11px;color:#333;">委託先A社①</div>
<div class="t" style="left:190px;top:387px;font-size:11px;color:#333;">開発2課</div>
<div class="t" style="left:267.5px;width:100px;text-align:right;top:387px;font-size:11.5px;letter-spacing:0.5px;-webkit-text-stroke:0;color:#333">0.0</div>
<div class="t" style="left:342.0px;width:100px;text-align:right;top:387px;font-size:11.5px;letter-spacing:0.5px;-webkit-text-stroke:0;color:#999">0.0</div>
<div class="t" style="left:409.5px;width:100px;text-align:right;top:387px;font-size:11.5px;letter-spacing:0.5px;-webkit-text-stroke:0;color:#999">0.0</div>
<div class="t" style="left:477.0px;width:100px;text-align:right;top:387px;font-size:11.5px;letter-spacing:0.5px;-webkit-text-stroke:0;color:#999">0.0</div>
<div class="t" style="left:544.5px;width:100px;text-align:right;top:387px;font-size:11.5px;letter-spacing:0.5px;-webkit-text-stroke:0;color:#999">0.0</div>
<div class="t" style="left:612.0px;width:100px;text-align:right;top:387px;font-size:11.5px;letter-spacing:0.5px;-webkit-text-stroke:0;color:#999">0.0</div>
<div class="t" style="left:679.5px;width:100px;text-align:right;top:387px;font-size:11.5px;letter-spacing:0.5px;-webkit-text-stroke:0;color:#999">0.0</div>
<div class="t" style="left:747.0px;width:100px;text-align:right;top:387px;font-size:11.5px;letter-spacing:0.5px;-webkit-text-stroke:0;color:#999">0.0</div>
<div class="t" style="left:814.5px;width:100px;text-align:right;top:387px;font-size:11.5px;letter-spacing:0.5px;-webkit-text-stroke:0;color:#999">0.0</div>
<div class="t" style="left:882.0px;width:100px;text-align:right;top:387px;font-size:11.5px;letter-spacing:0.5px;-webkit-text-stroke:0;color:#999">0.0</div>
<div class="t" style="left:949.5px;width:100px;text-align:right;top:387px;font-size:11.5px;letter-spacing:0.5px;-webkit-text-stroke:0;color:#999">0.0</div>
<svg style="left:77px;top:217.3px" width="14" height="17" viewBox="0 0 14 17"><path d="M2.6 16.2 Q2.8 13.6 6.5 13.6 Q10.2 13.6 10.4 16.2 Z" fill="#30344a"/><path d="M5.7 13.6 L6.5 16.2 L7.3 13.6 Z" fill="#e8e8e8"/><circle cx="1.3" cy="9.3" r="1.35" fill="#f0b088"/><circle cx="11.7" cy="9.3" r="1.35" fill="#f0b088"/><ellipse cx="6.5" cy="8.6" rx="5" ry="5.6" fill="#f7c9a2"/><path d="M1.1 9 Q0.4 0.9 6.5 0.9 Q12.6 0.9 11.9 9 L11.1 6.6 Q9.8 4.4 6.5 3.8 Q3.8 5.2 1.9 7.4 Z" fill="#14161f"/><ellipse cx="4.4" cy="9" rx="1.6" ry="1.2" fill="#fff" stroke="#777" stroke-width="0.35"/><ellipse cx="8.6" cy="9" rx="1.6" ry="1.2" fill="#fff" stroke="#777" stroke-width="0.35"/><circle cx="4.5" cy="9" r="0.6" fill="#333"/><circle cx="8.5" cy="9" r="0.6" fill="#333"/><ellipse cx="6.5" cy="12" rx="1" ry="0.5" fill="#c0603a"/></svg>
<svg style="left:77px;top:245.3px" width="14" height="17" viewBox="0 0 14 17"><path d="M2.6 16.2 Q2.8 13.6 6.5 13.6 Q10.2 13.6 10.4 16.2 Z" fill="#30344a"/><path d="M5.7 13.6 L6.5 16.2 L7.3 13.6 Z" fill="#5b8ad8"/><circle cx="1.3" cy="9.3" r="1.35" fill="#f0b088"/><circle cx="11.7" cy="9.3" r="1.35" fill="#f0b088"/><ellipse cx="6.5" cy="8.6" rx="5" ry="5.6" fill="#f7c9a2"/><path d="M1.2 9.2 Q0.6 1.2 6.5 1.2 Q12.6 1.2 12.4 9 L11.4 6.6 L9.8 6.1 L8.2 6.7 L6.6 5.9 L5 6.6 L3.3 6.1 L2.1 7.2 Z" fill="#3e2420"/><circle cx="4.5" cy="9" r="0.6" fill="#333"/><circle cx="8.5" cy="9" r="0.6" fill="#333"/><ellipse cx="6.5" cy="12" rx="1" ry="0.5" fill="#c0603a"/></svg>
<svg style="left:77px;top:273.3px" width="14" height="17" viewBox="0 0 14 17"><path d="M2.6 16.2 Q2.8 13.6 6.5 13.6 Q10.2 13.6 10.4 16.2 Z" fill="#30344a"/><path d="M5.7 13.6 L6.5 16.2 L7.3 13.6 Z" fill="#e8e8e8"/><circle cx="1.3" cy="9.3" r="1.35" fill="#f0b088"/><circle cx="11.7" cy="9.3" r="1.35" fill="#f0b088"/><ellipse cx="6.5" cy="8.6" rx="5" ry="5.6" fill="#f7c9a2"/><path d="M1.7 8.2 Q1.4 2.2 5 1.8 Q3.4 3.5 3.1 6.5 Z M11.3 8.2 Q11.6 2.2 8 1.8 Q9.6 3.5 9.9 6.5 Z" fill="#2e2a30"/><path d="M4 2.2 Q6.5 1.4 9 2.2" fill="none" stroke="#6a6068" stroke-width="0.6"/><ellipse cx="4.4" cy="9" rx="1.6" ry="1.2" fill="#fff" stroke="#777" stroke-width="0.35"/><ellipse cx="8.6" cy="9" rx="1.6" ry="1.2" fill="#fff" stroke="#777" stroke-width="0.35"/><circle cx="4.5" cy="9" r="0.6" fill="#333"/><circle cx="8.5" cy="9" r="0.6" fill="#333"/><ellipse cx="6.5" cy="12" rx="1" ry="0.5" fill="#c0603a"/></svg>
<svg style="left:77px;top:301.3px" width="14" height="17" viewBox="0 0 14 17"><path d="M2.6 16.2 Q2.8 13.6 6.5 13.6 Q10.2 13.6 10.4 16.2 Z" fill="#30344a"/><path d="M5.7 13.6 L6.5 16.2 L7.3 13.6 Z" fill="#e8e8e8"/><circle cx="1.3" cy="9.3" r="1.35" fill="#f0b088"/><circle cx="11.7" cy="9.3" r="1.35" fill="#f0b088"/><ellipse cx="6.5" cy="8.6" rx="5" ry="5.6" fill="#f7c9a2"/><path d="M1.5 8 Q1 1.4 6.5 1.4 Q12 1.4 11.6 8 L11 5.4 Q9 3.8 6.6 3.8 Q5.2 3.6 4.4 4.6 L3.8 3.9 Q2.4 5 2.1 7 Z" fill="#2a2630"/><circle cx="4.5" cy="9" r="0.6" fill="#333"/><circle cx="8.5" cy="9" r="0.6" fill="#333"/><ellipse cx="6.5" cy="12" rx="1" ry="0.5" fill="#c0603a"/></svg>
<svg style="left:77px;top:329.3px" width="14" height="17" viewBox="0 0 14 17"><path d="M2.6 16.2 Q2.8 13.6 6.5 13.6 Q10.2 13.6 10.4 16.2 Z" fill="#30344a"/><path d="M5.7 13.6 L6.5 16.2 L7.3 13.6 Z" fill="#5b8ad8"/><circle cx="1.3" cy="9.3" r="1.35" fill="#f0b088"/><circle cx="11.7" cy="9.3" r="1.35" fill="#f0b088"/><ellipse cx="6.5" cy="8.6" rx="5" ry="5.6" fill="#f7c9a2"/><path d="M1.2 8.6 Q0.5 1.2 6.8 1.2 Q12.8 1.4 11.8 8.2 L11 6.2 Q10.5 4.6 9 4.4 Q7.5 5.8 4 6.1 Q2.8 6.8 2.2 8.5 Z" fill="#0f1118"/><circle cx="4.5" cy="9" r="0.6" fill="#333"/><circle cx="8.5" cy="9" r="0.6" fill="#333"/><ellipse cx="6.5" cy="12" rx="1" ry="0.5" fill="#c0603a"/></svg>
<svg style="left:77px;top:357.3px" width="14" height="17" viewBox="0 0 14 17"><path d="M2.6 16.2 Q2.8 13.6 6.5 13.6 Q10.2 13.6 10.4 16.2 Z" fill="#30344a"/><path d="M5.7 13.6 L6.5 16.2 L7.3 13.6 Z" fill="#e8e8e8"/><circle cx="1.3" cy="9.3" r="1.35" fill="#f0b088"/><circle cx="11.7" cy="9.3" r="1.35" fill="#f0b088"/><ellipse cx="6.5" cy="8.6" rx="5" ry="5.6" fill="#f7c9a2"/><path d="M1 14 Q-0.2 1.2 6.5 1.2 Q13.2 1.2 12 14 L10.9 13.5 Q11.4 5.5 10.2 4.6 Q8.6 3.2 6.6 3.4 Q5 4.8 3.6 5.2 Q2 6.5 2.2 13.5 Z" fill="#141218"/><circle cx="4.5" cy="9" r="0.6" fill="#333"/><circle cx="8.5" cy="9" r="0.6" fill="#333"/><ellipse cx="6.5" cy="12" rx="1" ry="0.5" fill="#c0603a"/></svg>
<svg style="left:74px;top:384px" width="18" height="18" viewBox="0 0 18 18"><circle cx="9" cy="9" r="8.5" fill="#6c6c78"/><circle cx="9" cy="6.8" r="2.9" fill="#fff"/><path d="M3.6 14.4 Q5 10.8 9 10.8 Q13 10.8 14.4 14.4 Q12.3 16.6 9 16.6 Q5.7 16.6 3.6 14.4Z" fill="#fff"/></svg>
<div class="a" style="left:0px;top:424px;width:374px;height:15px;background:#f9f9f9"></div>
<div class="a" style="left:380px;top:424px;width:659px;height:15px;background:#f9f9f9"></div>
<svg style="left:4.5px;top:427px" width="7" height="9" viewBox="0 0 7 9"><path d="M5.5 0 V9 L0 4.5Z" fill="#8a8a8a"/></svg>
<svg style="left:364px;top:427px" width="7" height="9" viewBox="0 0 7 9"><path d="M0 0 V9 L5.5 4.5Z" fill="#8a8a8a"/></svg>
<div class="a" style="left:18px;top:427px;width:158px;height:9px;background:#898989;border-radius:4.5px"></div>
<svg style="left:385px;top:427px" width="7" height="9" viewBox="0 0 7 9"><path d="M5.5 0 V9 L0 4.5Z" fill="#8a8a8a"/></svg>
<svg style="left:1033px;top:427px" width="7" height="9" viewBox="0 0 7 9"><path d="M0 0 V9 L6 4.5Z" fill="#8a8a8a"/></svg>
<div class="a" style="left:398px;top:427px;width:516px;height:9px;background:#898989;border-radius:4.5px"></div>
<svg style="left:430px;top:228px" width="15" height="21" viewBox="0 0 15 21"><path d="M1.3 1.2 V17.4 L5 14.2 L8.3 19.6 L10.6 18.3 L7.6 13.3 L12.6 13 Z" fill="#fff" stroke="#111" stroke-width="1" stroke-linejoin="round"/></svg>
</div>
</body></html>
